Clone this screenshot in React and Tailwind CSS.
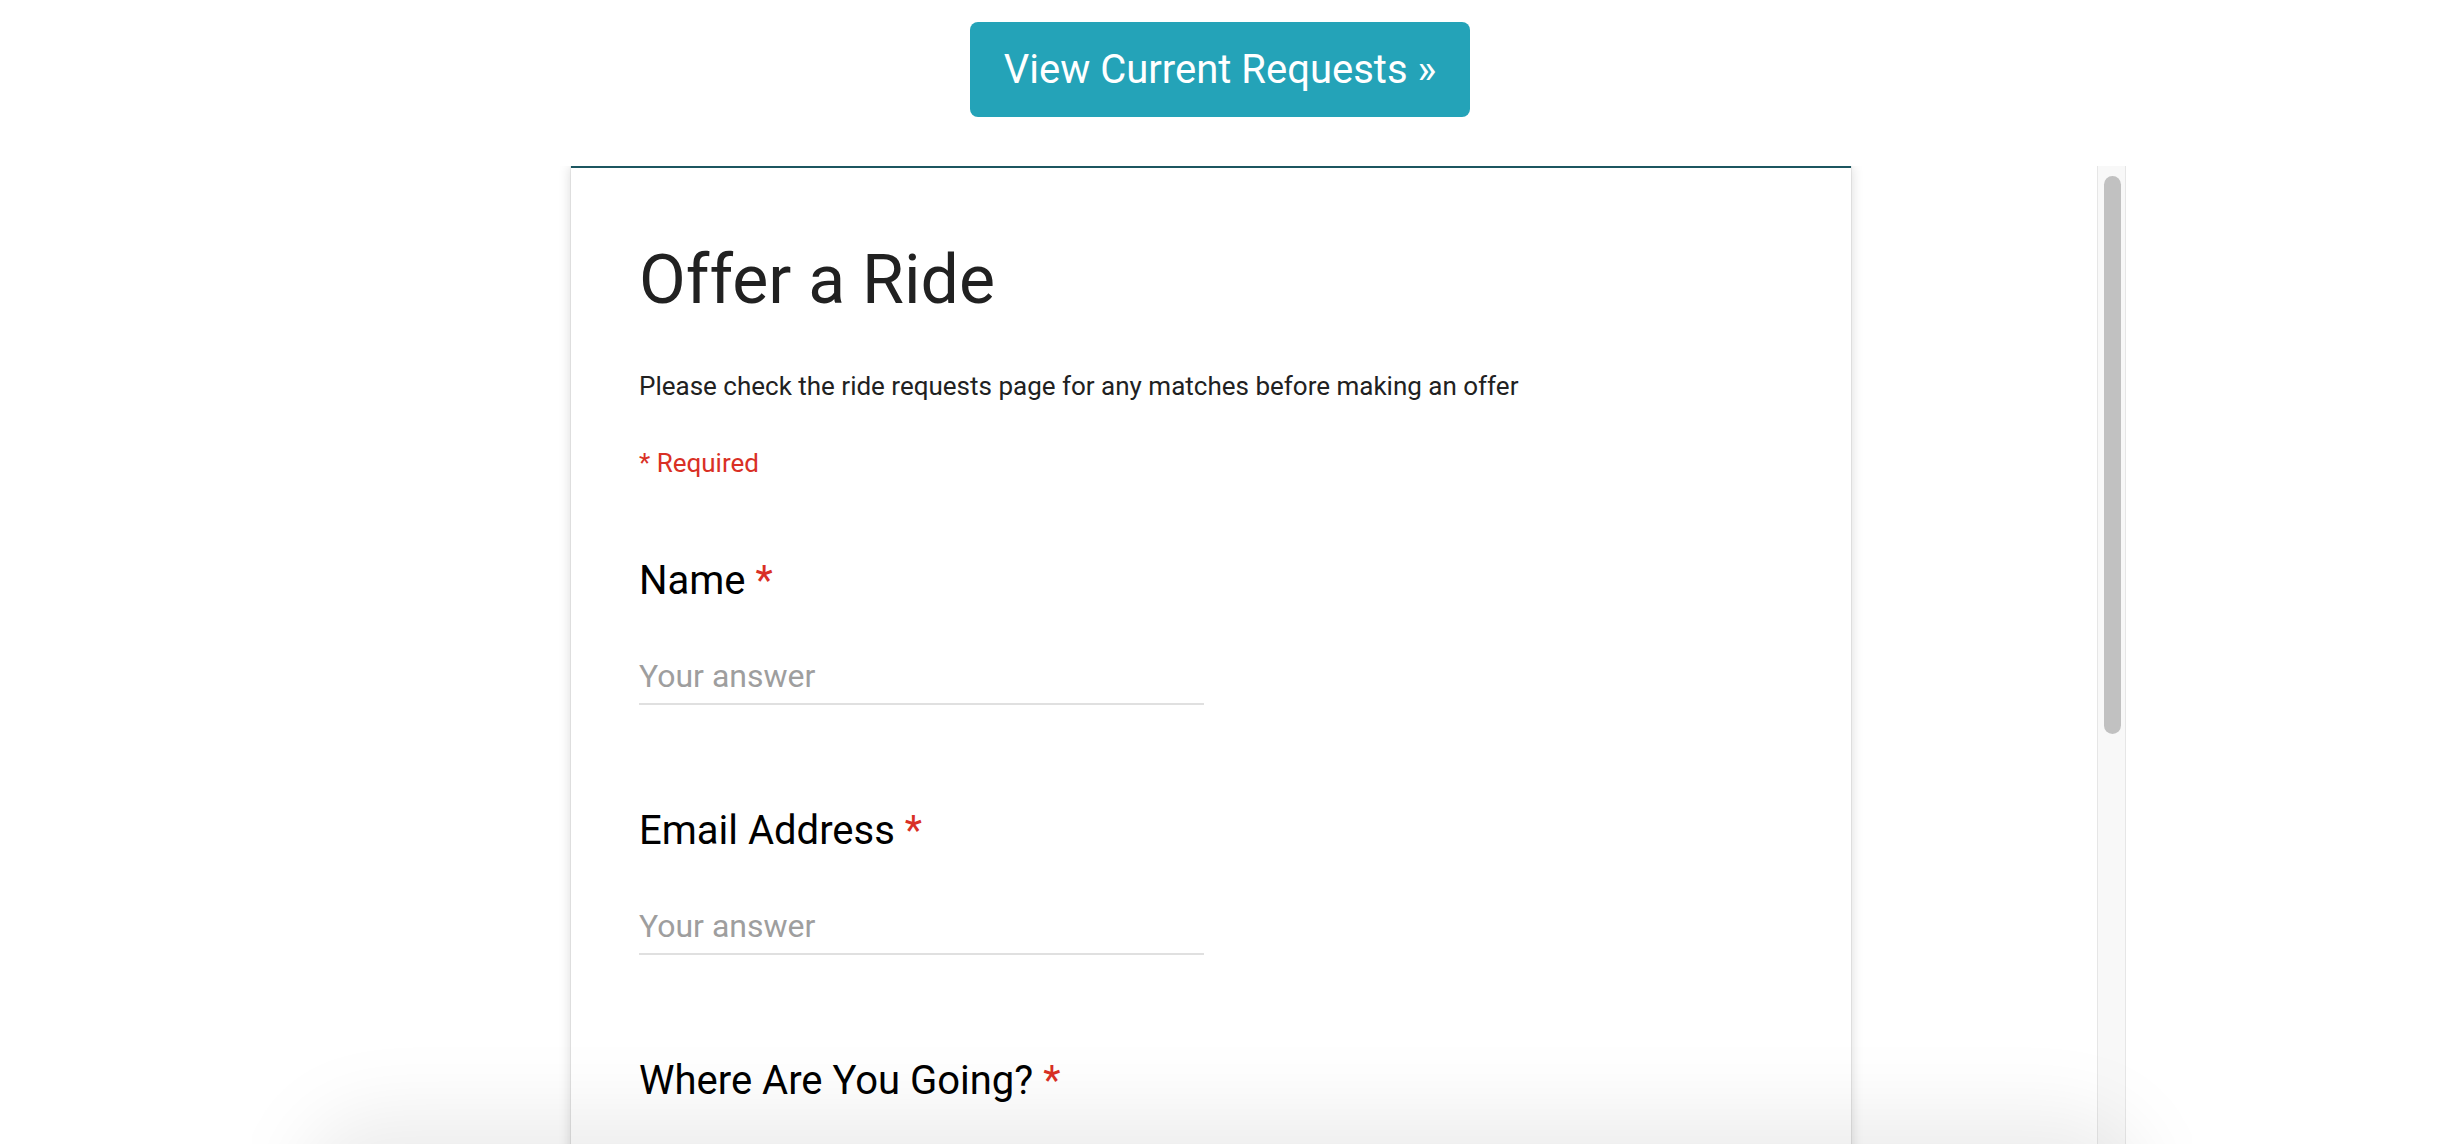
import React from "react";

function Question({ label }) {
  return (
    <div className="flex flex-col">
      <div className="text-[40px] leading-[48px] text-black">
        {label} <span className="text-[#d93025]">*</span>
      </div>
      <div className="mt-[51px] w-[565px] border-b-2 border-[#e0e0e0] pb-[7px] text-[32px] leading-[40px] text-[#9e9e9e]">
        Your answer
      </div>
    </div>
  );
}

export default function App() {
  return (
    <div
      className="relative h-[1144px] w-[2444px] overflow-hidden bg-white"
      style={{ fontFamily: "Roboto, 'Noto Sans', Arial, sans-serif" }}
    >
      <div className="flex justify-center pt-[22px] pr-[4px]">
        <button className="flex h-[95px] items-center rounded-[8px] bg-[#24a3b8] px-[34px] text-[40px] leading-[60px] text-white">
          View Current Requests »
        </button>
      </div>

      <div className="mt-[49px] ml-[325px] flex h-[978px] w-[1801px] overflow-hidden">
        <div className="flex flex-1 justify-center">
          <div className="flex w-[1280px] flex-none flex-col self-start border-t-2 border-[#1c5660] bg-white px-[68px] pt-[70px] pb-[60px] shadow-[0_0_1px_rgba(0,0,0,0.35),0_0_12px_rgba(0,0,0,0.16)]">
            <h1 className="text-[68px] leading-[84px] text-[#212121]">Offer a Ride</h1>
            <p className="mt-[46px] text-[26px] leading-[36px] text-[#212121]">
              Please check the ride requests page for any matches before making an offer
            </p>
            <p className="mt-[41px] text-[26px] leading-[36px] text-[#d93025]">* Required</p>
            <div className="mt-[76px] flex flex-col gap-[102px]">
              <Question label="Name" />
              <Question label="Email Address" />
              <Question label="Where Are You Going?" />
            </div>
          </div>
        </div>
        <div className="flex w-[29px] flex-none border-x border-[#e6e6e6] bg-[#f8f8f8]">
          <div className="mt-[10px] ml-[6px] h-[558px] w-[17px] rounded-full bg-[#c1c1c1]" />
        </div>
      </div>

      <div className="pointer-events-none absolute top-[1112px] left-[300px] h-[200px] w-[1844px] rounded-[80px] bg-black/[0.07] blur-[36px]" />
    </div>
  );
}
